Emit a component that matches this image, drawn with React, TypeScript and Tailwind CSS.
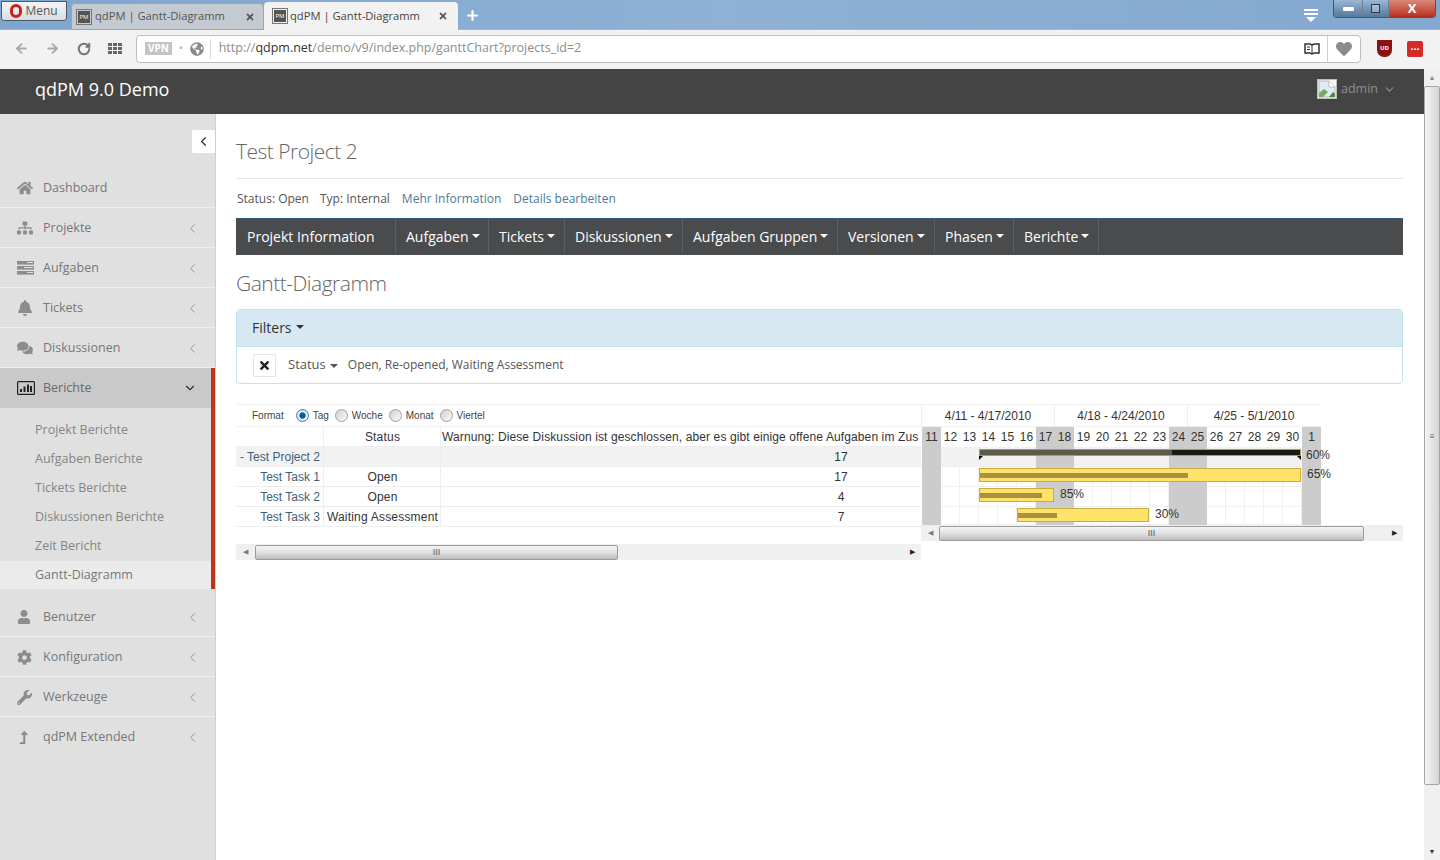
import { ArrowLeft, ArrowRight, ChevronDown, ChevronLeft, Plus, RotateCw } from 'lucide-react';
import { FaBell, FaCog, FaComments, FaGlobeAmericas, FaHeart, FaHome, FaLevelUpAlt, FaSitemap, FaTimes, FaUser, FaWrench } from 'react-icons/fa';
import type { ReactNode } from 'react';

const DAYS = [11, 12, 13, 14, 15, 16, 17, 18, 19, 20, 21, 22, 23, 24, 25, 26, 27, 28, 29, 30, 1];
const WEEKEND = [11, 17, 18, 24, 25, 1];

const SUBMENU = ['Projekt Berichte', 'Aufgaben Berichte', 'Tickets Berichte', 'Diskussionen Berichte', 'Zeit Bericht'];
const TOPNAV = [
  { label: 'Aufgaben', w: 'w-[93px]' },
  { label: 'Tickets', w: 'w-[76px]' },
  { label: 'Diskussionen', w: 'w-[118px]' },
  { label: 'Aufgaben Gruppen', w: 'w-[155px]' },
  { label: 'Versionen', w: 'w-[97px]' },
  { label: 'Phasen', w: 'w-[79px]' },
  { label: 'Berichte', w: 'w-[85px]' },
];

function TasksIcon() {
  return (
    <svg width="17" height="14" viewBox="0 0 17 14" fill="#8c8c8c">
      <rect x="0" y="0" width="17" height="3.6" />
      <rect x="0" y="5" width="17" height="3.6" />
      <rect x="0" y="10" width="17" height="3.6" />
      <rect x="10" y="1" width="6" height="1" fill="#e0e0e0" />
      <rect x="7" y="6" width="9" height="1" fill="#e0e0e0" />
      <rect x="10" y="11" width="6" height="1" fill="#e0e0e0" />
    </svg>
  );
}

function ReportIcon() {
  return (
    <svg width="18" height="14" viewBox="0 0 18 14" fill="#222">
      <path d="M0 1.5A1.5 1.5 0 0 1 1.5 0h15A1.5 1.5 0 0 1 18 1.5v11a1.5 1.5 0 0 1-1.5 1.5h-15A1.5 1.5 0 0 1 0 12.5zM1.2 1.2v11.6h15.6V1.2z" fillRule="evenodd" />
      <rect x="3" y="8" width="2" height="3" />
      <rect x="6.5" y="5.5" width="2" height="5.5" />
      <rect x="10" y="3.5" width="2" height="7.5" />
      <rect x="13" y="5" width="2" height="6" />
    </svg>
  );
}

function BookIcon() {
  return (
    <svg width="16" height="12" viewBox="0 0 16 12" fill="none" stroke="#333" strokeWidth="1.5">
      <path d="M1 1h5l2 1 2-1h5v9h-5l-2 1-2-1H1z" />
      <path d="M8 2v9M3 4h3M3 6.5h3" strokeWidth="1" />
    </svg>
  );
}

// kaputtes Bild neben "admin"
function BrokenImage() {
  return (
    <svg width="20" height="20" viewBox="0 0 20 20" className="mr-[4px] -mt-[2px]">
      <rect x="0.5" y="0.5" width="19" height="19" fill="#f4f4f4" stroke="#bdbdbd" />
      <path d="M2 2h10l6 6v10H2z" fill="#dfeaf4" stroke="#9a9a9a" strokeWidth="0.6" />
      <path d="M2 14l5-4 4 3-5 5H2z" fill="#6fae54" />
      <path d="M12 18l4-5 2 2v3z" fill="#4c8a3a" />
      <path d="M12 2v6h6" fill="#fff" stroke="#9a9a9a" strokeWidth="0.6" />
    </svg>
  );
}

function Favicon() {
  return (
    <span className="w-[16px] h-[16px] shrink-0 mr-[3px] p-[1px] border border-[#777] flex">
      <span className="flex-1 bg-[#555] text-white text-[6px] leading-none flex items-center justify-center">PM</span>
    </span>
  );
}

function Caret({ tight = false }: { tight?: boolean }) {
  return <span className={`inline-block align-middle border-x-[4px] border-x-transparent border-t-[4px] border-t-current ${tight ? 'ml-[3px]' : 'ml-[4px]'}`} />;
}

function MenuItem({ icon, label, arrow = true }: { icon: ReactNode; label: string; arrow?: boolean }) {
  return (
    <div className="h-[40px] flex items-center pt-[1px] border-b border-[#efefef] text-[12.5px] text-[#777]">
      <span className="w-[43px] pl-[17px] shrink-0 flex items-center text-[#8c8c8c]">{icon}</span>
      <span className="flex-1">{label}</span>
      {arrow && <ChevronLeft size={15} strokeWidth={1.5} className="mr-[15px] text-[#8f8f8f]" />}
    </div>
  );
}

function Scrollbar({ thumb, arrow }: { thumb: string; arrow: string }) {
  return (
    <div className="h-[16px] flex items-center bg-[#f0f0f0] text-[#7a7a7a]">
      <span className={`${arrow} shrink-0 text-center text-[7px]`}>◀</span>
      <div className={`${thumb} h-[15px] shrink-0 rounded-[2px] border border-[#9c9c9c] bg-gradient-to-b from-[#f4f4f4] via-[#e0e0e0] to-[#bdbdbd] flex items-center justify-center text-[9px] leading-none text-[#555]`}>
        III
      </div>
      <span className="flex-1" />
      <span className="w-[17px] shrink-0 text-center text-[7px] text-[#222]">▶</span>
    </div>
  );
}

function Radio({ checked = false }: { checked?: boolean }) {
  return (
    <span className={`inline-block w-[13px] h-[13px] rounded-full border ${checked ? 'border-[#4a7da5] bg-[radial-gradient(circle,#0f5a90_35%,#dbe8f2_45%)]' : 'border-[#a0a0a0] bg-gradient-to-br from-[#d0d0d0] to-[#fafafa]'}`} />
  );
}

function GanttRow({ shaded = false, short = false, children }: { shaded?: boolean; short?: boolean; children?: ReactNode }) {
  return (
    <div className={`relative flex ${short ? 'h-[18px]' : 'h-[20px]'} ${shaded ? 'bg-[#f2f2f2]' : 'bg-white'}`}>
      {DAYS.map(d => (
        <div key={d} className={`w-[19px] shrink-0 border-r border-b ${WEEKEND.includes(d) ? 'bg-[#cccccc] border-[#cccccc]' : 'border-[#f0f0f0]'}`} />
      ))}
      {children}
    </div>
  );
}

function TaskBar({ left, width, progress, label }: { left: number; width: number; progress: number; label: string }) {
  return (
    <>
      <div className="absolute top-[1px] h-[14px] bg-[#ffe26a] border border-[#c9ad3c]" style={{ left, width }}>
        <div className="absolute left-0 top-[4px] h-[5px] bg-[#a89240]" style={{ width: progress }} />
      </div>
      <span className="absolute top-[-2px] text-[12px] text-[#333]" style={{ left: left + width + 6 }}>{label}</span>
    </>
  );
}

export default function App() {
  return (
    <div className="w-[1440px] h-[860px] overflow-hidden bg-white font-['Open_Sans',sans-serif]">
      {/* browser tabs */}
      <div className="h-[30px] flex items-start bg-gradient-to-r from-[#7fa6cf] via-[#8eb1d5] to-[#83a8cf] border-b border-[#a9b4be]">
        <div className="mt-[1px] ml-[1px] w-[66px] h-[20px] flex items-center justify-center gap-[3px] rounded-b-[3px] border border-[#4a5a6a] bg-gradient-to-b from-[#f5f5f5] to-[#d8dde2] text-[12px] text-[#555]">
          <span className="w-[12px] h-[14px] rounded-full border-[3px] border-[#c8201e]" />
          Menu
        </div>
        <div className="ml-[4px] mt-[3px] w-[193px] h-[27px] flex items-center pl-[4px] pr-[7px] rounded-t-[4px] border border-[#9aa5ad] bg-[#c3cad1] text-[11.2px] text-[#555]">
          <Favicon />
          <span className="flex-1 truncate">qdPM | Gantt-Diagramm</span>
          <FaTimes size={10} className="text-[#555] mr-[1px]" />
        </div>
        <div className="mt-[2px] w-[194px] h-[28px] flex items-center pl-[8px] pr-[7px] rounded-t-[4px] bg-[#f2f2f2] text-[11.2px] text-[#444]">
          <Favicon />
          <span className="flex-1 truncate -ml-[1px]">qdPM | Gantt-Diagramm</span>
          <FaTimes size={10} className="text-[#555] mr-[3px]" />
        </div>
        <Plus size={15} strokeWidth={3.5} className="ml-[7px] mt-[8px] text-white" />
        <div className="flex-1" />
        <div className="mt-[9px] mr-[15px] w-[14px] flex flex-col gap-[2px]">
          <span className="h-[2px] bg-white" />
          <span className="h-[2px] bg-white" />
          <span className="mx-auto border-x-[5px] border-x-transparent border-t-[5px] border-t-white" />
        </div>
        <div className="mr-[4px] h-[18px] flex rounded-b-[4px] border border-t-0 border-[#44586c] overflow-hidden">
          <div className="w-[28px] flex items-center justify-center bg-gradient-to-b from-[#9ab8d6] to-[#56789b]">
            <span className="w-[11px] h-[4px] bg-white rounded-[1px]" />
          </div>
          <div className="w-[27px] flex items-center justify-center border-x border-[#6c8195] bg-gradient-to-b from-[#9ab8d6] to-[#56789b]">
            <span className="w-[9px] h-[9px] border border-[#2b3b4a] bg-white/30" />
          </div>
          <div className="w-[46px] flex items-center justify-center bg-gradient-to-b from-[#d88878] to-[#b82a20] text-[13px] font-bold leading-none text-white">
            X
          </div>
        </div>
      </div>

      {/* browser toolbar */}
      <div className="h-[39px] flex items-center pb-[2px] bg-[#f2f2f2] text-[#a8a8a8]">
        <span className="w-[45px] pl-[14px]"><ArrowLeft size={15} strokeWidth={3} /></span>
        <span className="w-[32px]"><ArrowRight size={15} strokeWidth={3} /></span>
        <span className="w-[31px] text-[#777]"><RotateCw size={14} strokeWidth={3.5} /></span>
        <div className="w-[28px] grid grid-cols-3 gap-[1px] pr-[14px]">
          {Array.from({ length: 9 }).map((_, i) => <span key={i} className="h-[3px] bg-[#666]" />)}
        </div>
        <div className="w-[1225px] h-[28px] flex items-center rounded-[4px] border border-[#bdbdbd] bg-white">
          <span className="ml-[8px] px-[3px] h-[13px] flex items-center bg-[#c4c4c4] text-[10px] font-bold text-white">VPN</span>
          <span className="mx-[7px] text-[10px]">•</span>
          <FaGlobeAmericas size={14} className="text-[#8a8a8a]" />
          <span className="ml-[6px] h-[20px] border-l border-[#d8d8d8]" />
          <span className="ml-[8px] flex-1 text-[12.5px] text-[#8d8d8d]">
            http://<span className="text-[#333]">qdpm.net</span>/demo/v9/index.php/ganttChart?projects_id=2
          </span>
          <span className="mr-[7px] flex"><BookIcon /></span>
          <span className="w-[33px] h-full flex items-center justify-center border-l border-[#d0d0d0]">
            <FaHeart size={16} className="text-[#8c8c8c]" />
          </span>
        </div>
        <span className="ml-[16px] w-[15px] h-[17px] rounded-b-[7px] bg-[#8c1212] text-[6px] font-bold text-white flex items-center justify-center">UD</span>
        <span className="ml-[15px] w-[16px] h-[16px] rounded-[2px] bg-[#d32a2a] text-[8px] leading-none text-white flex items-center justify-center">•••</span>
      </div>

      <div className="flex h-[791px]">
        <div className="w-[1424px] shrink-0 flex flex-col">
          {/* app header */}
          <div className="h-[45px] shrink-0 flex items-center justify-between bg-[#444444] pl-[35px] pr-[28px] pb-[4px]">
            <span className="text-[18px] text-white">qdPM 9.0 Demo</span>
            <div className="flex items-center text-[12.5px] text-[#8f8f8f]">
              <BrokenImage />
              admin
              <ChevronDown size={13} className="ml-[5px]" />
            </div>
          </div>

          <div className="flex flex-1 min-h-0">
            {/* sidebar */}
            <div className="w-[216px] shrink-0 bg-[#e0e0e0] border-r border-[#cfcfcf] flex flex-col">
              <div className="h-[54px] shrink-0 flex justify-end pt-[16px]">
                <span className="w-[23px] h-[23px] bg-white flex items-center justify-center rounded-l-[2px]">
                  <ChevronLeft size={15} className="text-[#333]" />
                </span>
              </div>
              <MenuItem icon={<FaHome size={16} />} label="Dashboard" arrow={false} />
              <MenuItem icon={<FaSitemap size={16} />} label="Projekte" />
              <MenuItem icon={<TasksIcon />} label="Aufgaben" />
              <MenuItem icon={<FaBell size={16} />} label="Tickets" />
              <MenuItem icon={<FaComments size={16} />} label="Diskussionen" />
              <div className="border-r-[4px] border-[#c0341d] mb-[8px] h-[221px]">
                <div className="h-[40px] flex items-center bg-[#c9c9c9] text-[12.5px] text-[#6a6a6a]">
                  <span className="w-[43px] pl-[17px] shrink-0 flex"><ReportIcon /></span>
                  <span className="flex-1">Berichte</span>
                  <ChevronDown size={14} className="mr-[14px] text-[#333]" />
                </div>
                <div className="pt-[8px]">
                  {SUBMENU.map(s => (
                    <div key={s} className="h-[29px] flex items-center pl-[35px] text-[12.5px] text-[#858585]">{s}</div>
                  ))}
                  <div className="h-[28px] flex items-center pl-[35px] text-[12.5px] text-[#777] bg-[#ebebeb]">Gantt-Diagramm</div>
                </div>
              </div>
              <MenuItem icon={<FaUser size={14} />} label="Benutzer" />
              <MenuItem icon={<FaCog size={15} />} label="Konfiguration" />
              <MenuItem icon={<FaWrench size={15} />} label="Werkzeuge" />
              <div className="[&>div]:border-transparent">
                <MenuItem icon={<FaLevelUpAlt size={13} />} label="qdPM Extended" />
              </div>
            </div>

            {/* main content */}
            <div className="flex-1 pl-[20px] pr-[21px]">
              <div className="h-[65px] flex items-end pb-[12px] border-b border-[#e5e5e5] text-[21px] font-light tracking-[-0.5px] leading-[30px] text-[#666]">Test Project 2</div>
              <div className="h-[39px] flex items-center pl-[1px] text-[12px] text-[#555]">
                <span className="mr-[11px]">Status: Open</span>
                <span className="mr-[12px]">Typ: Internal</span>
                <span className="mr-[12px] text-[#4d7a97]">Mehr Information</span>
                <span className="text-[#4d7a97]">Details bearbeiten</span>
              </div>
              <div className="h-[37px] flex pb-[2px] bg-[#4a4b4d] border-t border-[#2e5d77] text-[14px] text-white">
                <div className="w-[160px] flex items-center pl-[11px] border-r border-[#5c5d5f]">Projekt Information</div>
                {TOPNAV.map(n => (
                  <div key={n.label} className={`${n.w} flex items-center pl-[10px] border-r border-[#5c5d5f]`}>
                    {n.label}<Caret tight />
                  </div>
                ))}
              </div>
              <div className="h-[54px] flex items-center pt-[3px] text-[21px] font-light tracking-[-0.5px] text-[#666]">Gantt-Diagramm</div>

              <div className="rounded-[4px] border border-[#c6e2ee]">
                <div className="h-[37px] flex items-center pl-[15px] pb-[2px] bg-[#d6e9f3] border-b border-[#c6e2ee] text-[14px] text-[#333]">
                  Filters<Caret />
                </div>
                <div className="h-[36px] flex items-center pl-[16px] text-[#555]">
                  <span className="w-[23px] h-[23px] mr-[12px] flex items-center justify-center rounded-[2px] border border-[#e5e5e5] text-[#222]">
                    <FaTimes size={13} />
                  </span>
                  <span className="text-[13px] mr-[10px]">Status<Caret /></span>
                  <span className="text-[12px]">Open, Re-opened, Waiting Assessment</span>
                </div>
              </div>

              {/* gantt */}
              <div className="mt-[20px] flex font-['Liberation_Sans',sans-serif] text-[12px] text-[#333]">
                <div className="w-[685px] shrink-0">
                  <div className="h-[23px] flex items-center gap-[4px] pl-[16px] border-y border-[#f0f0f0] text-[10px] text-[#444]">
                    <span className="mr-[8px]">Format</span>
                    <Radio checked /><span className="mr-[2px]">Tag</span>
                    <Radio /><span className="mr-[2px]">Woche</span>
                    <Radio /><span className="mr-[2px]">Monat</span>
                    <Radio /><span>Viertel</span>
                  </div>
                  {[
                    { name: '', status: 'Status', val: 'Warnung: Diese Diskussion ist geschlossen, aber es gibt einige offene Aufgaben im Zus', isHead: true },
                    { name: '- Test Project 2', status: '', val: '17', shaded: true, project: true },
                    { name: 'Test Task 1', status: 'Open', val: '17' },
                    { name: 'Test Task 2', status: 'Open', val: '4' },
                    { name: 'Test Task 3', status: 'Waiting Assessment', val: '7' },
                  ].map(r => (
                    <div key={r.name + r.status} className={`h-[20px] flex items-center border-b border-[#eeeeee] ${r.shaded ? 'bg-[#f2f2f2]' : ''}`}>
                      <div className={`w-[88px] h-full flex items-center border-r border-[#eeeeee] text-[#3d6079] whitespace-nowrap ${r.project ? 'pl-[4px]' : 'justify-end pr-[3px]'}`}>{r.name}</div>
                      <div className="w-[117px] h-full flex items-center justify-center pl-[1px] border-r border-[#eeeeee] whitespace-nowrap tracking-[0.2px]">{r.status}</div>
                      {r.isHead ? (
                        <div className="flex-1 h-full flex items-center pl-[1px] whitespace-nowrap overflow-hidden tracking-[0.11px]">{r.val}</div>
                      ) : (
                        <div className="flex-1 h-full flex items-center justify-end pr-[67px]"><span className="w-[26px] text-center">{r.val}</span></div>
                      )}
                    </div>
                  ))}
                  <div className="h-[17px]" />
                  <Scrollbar thumb="w-[363px]" arrow="w-[19px]" />
                </div>
                <div className="w-[482px] shrink-0 pl-[1px]">
                  <div className="w-[399px] h-[23px] -ml-[1px] flex items-center border-y border-[#f0f0f0]">
                    {['4/11 - 4/17/2010', '4/18 - 4/24/2010', '4/25 - 5/1/2010'].map(w => (
                      <div key={w} className="w-[133px] h-full flex items-center justify-center border-l border-[#eeeeee]">{w}</div>
                    ))}
                  </div>
                  <div className="w-[399px] h-[20px] flex">
                    {DAYS.map(d => (
                      <div key={d} className={`w-[19px] shrink-0 flex items-center justify-center ${WEEKEND.includes(d) ? 'bg-[#cccccc]' : ''}`}>{d}</div>
                    ))}
                  </div>
                  <div className="w-[399px]">
                    <GanttRow shaded>
                      <div className="absolute left-[57px] top-[2px] w-[322px] h-[7px] bg-[#1c1a10] border border-[#b09b4a]">
                        <div className="h-full w-[192px] bg-[#5d5a48]" />
                      </div>
                      <span className="absolute left-[57px] top-[9px] border-r-[4px] border-r-transparent border-t-[4px] border-t-black" />
                      <span className="absolute left-[375px] top-[9px] border-l-[4px] border-l-transparent border-t-[4px] border-t-black" />
                      <span className="absolute left-[384px] top-[-1px] text-[12px]">60%</span>
                    </GanttRow>
                    <GanttRow><TaskBar left={57} width={322} progress={208} label="65%" /></GanttRow>
                    <GanttRow><TaskBar left={57} width={75} progress={62} label="85%" /></GanttRow>
                    <GanttRow short><TaskBar left={95} width={132} progress={39} label="30%" /></GanttRow>
                  </div>
                  <div className="-ml-[1px]"><Scrollbar thumb="w-[425px]" arrow="w-[18px]" /></div>
                </div>
              </div>
            </div>
          </div>
        </div>

        {/* page scrollbar */}
        <div className="w-[16px] shrink-0 bg-[#f0f0f0] flex flex-col text-[#888]">
          <span className="h-[17px] text-center text-[7px] leading-[17px]">▲</span>
          <div className="h-[699px] border border-[#a5a5a5] rounded-[2px] bg-gradient-to-r from-[#f4f4f4] to-[#d6d6d6] flex items-center justify-center text-[8px] text-[#555]">≡</div>
          <span className="flex-1" />
          <span className="h-[17px] text-center text-[7px] leading-[17px] text-[#333]">▼</span>
        </div>
      </div>
    </div>
  );
}
